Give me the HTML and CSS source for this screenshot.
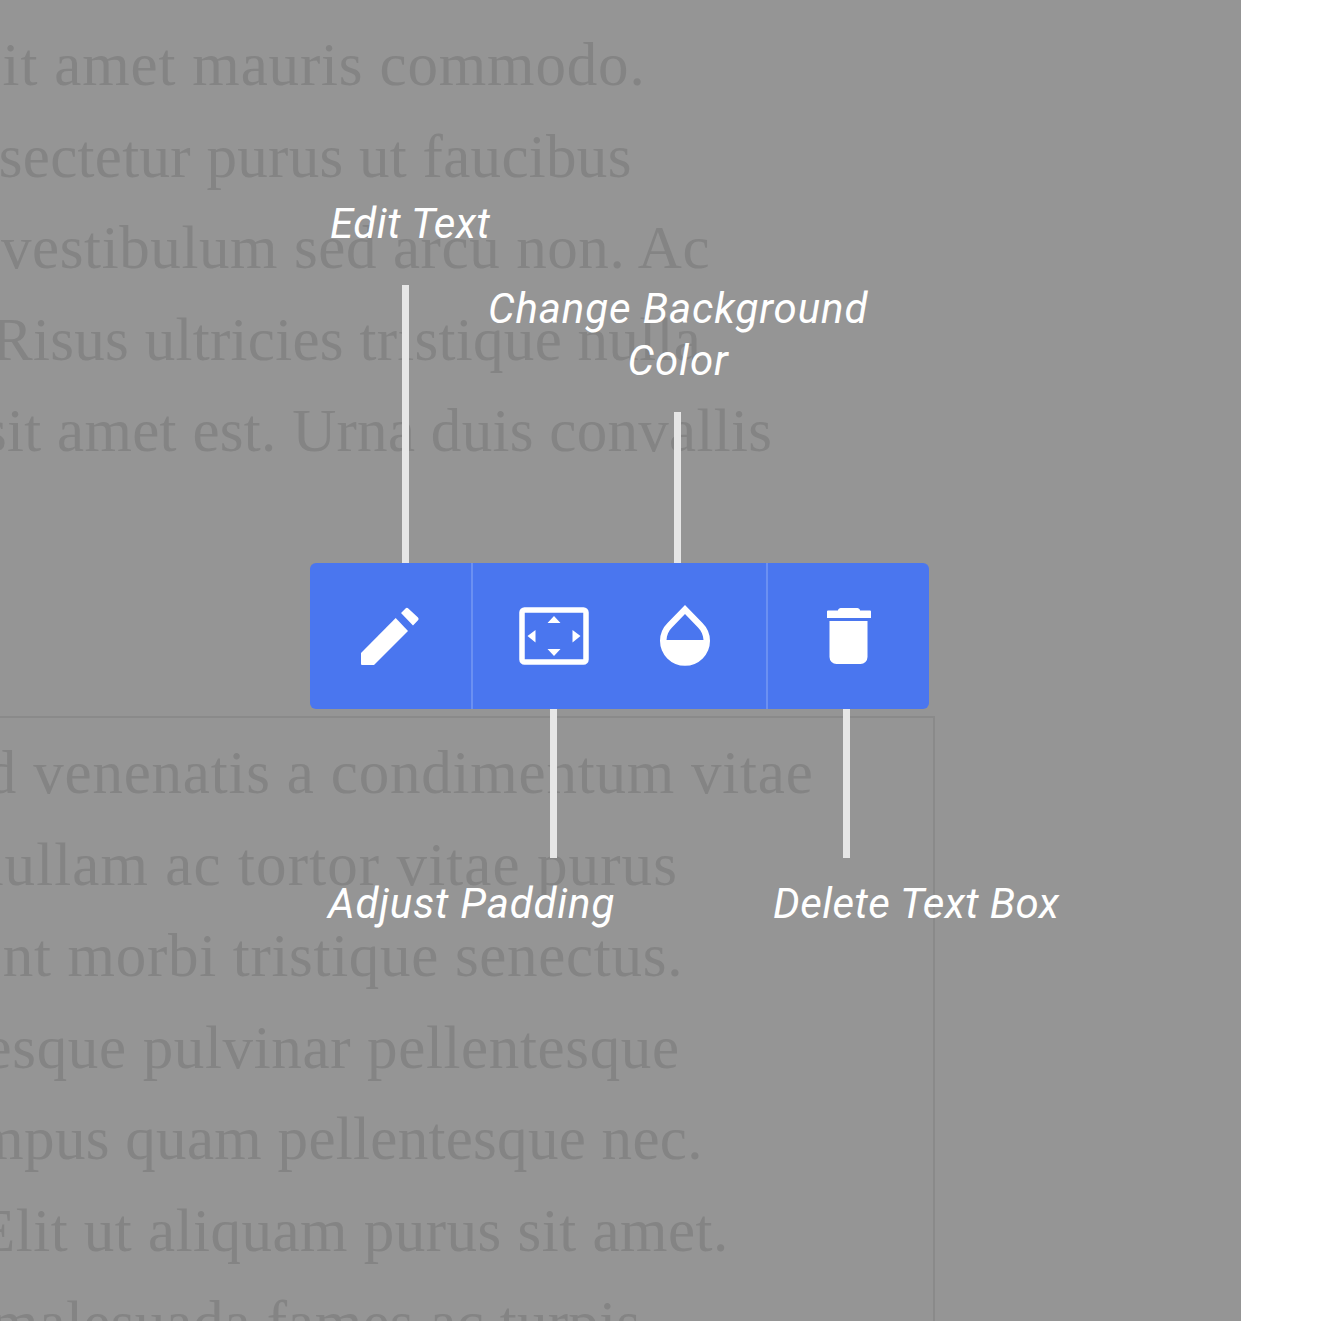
FILE: index.html
```html
<!DOCTYPE html>
<html lang="en">
<head>
<meta charset="utf-8">
<title>Text box toolbar</title>
<link rel="stylesheet" href="styles.css">
</head>
<body>
<main class="canvas">
  <div class="prose prose-top">
    <p class="line l1">sit amet mauris commodo.</p>
    <p class="line l2">nsectetur purus ut faucibus</p>
    <p class="line l3">vestibulum sed arcu non. Ac</p>
    <p class="line l4">Risus ultricies tristique nulla</p>
    <p class="line l5">sit amet est. Urna duis convallis</p>
  </div>
  <div class="textbox">
    <div class="prose">
      <p class="line l6">ed venenatis a condimentum vitae</p>
      <p class="line l7">nullam ac tortor vitae purus</p>
      <p class="line l8">ent morbi tristique senectus.</p>
      <p class="line l9">tesque pulvinar pellentesque</p>
      <p class="line l10">empus quam pellentesque nec.</p>
      <p class="line l11">Elit ut aliquam purus sit amet.</p>
      <p class="line l12">malesuada fames ac turpis</p>
    </div>
  </div>

  <div class="toolbar">
    <div class="group group-edit">
      <svg class="icon" width="60" height="60" viewBox="1 0 60 60" aria-hidden="true"><path fill="#fff" d="M1 47 35.700 12 48 25 14 59H2a1 1 0 0 1-1-1Z"/><path fill="#fff" d="M41 7 45.500 2.500a2 2 0 0 1 2.800 0L58 11.500a2 2 0 0 1 0 2.800L53 19.500Z"/></svg>
    </div>
    <div class="group group-middle">
      <svg class="icon" width="70" height="58" viewBox="0 0 70 58" aria-hidden="true"><rect x="3" y="3" width="64" height="52" rx="2.500" fill="none" stroke="#fff" stroke-width="5.500"/><path fill="#fff" d="M35 9 41.500 16H28.500ZM35 49 28.500 42H41.500ZM8.500 29 16.500 23V35.500ZM61.500 29 53.500 23V35.500Z"/></svg>
      <svg class="icon" width="52" height="62" viewBox="0 0 52 62" aria-hidden="true"><path fill="#fff" fill-rule="evenodd" d="M26 0 43.500 18A25 25 0 1 1 8.500 18ZM26 9 13 22.500C9.500 26 7.800 30 7.500 35H44.500C44.200 30 42.500 26 39 22.500Z"/></svg>
    </div>
    <div class="group group-delete">
      <svg class="icon" width="46" height="58" viewBox="0 0 46 58" aria-hidden="true"><path fill="#fff" d="M12 3.500C12 1.500 14 1 16 1H30C32 1 34 1.500 34 3.500H44a1 1 0 0 1 1 1V11H1V4.500a1 1 0 0 1 1-1ZM3.500 14H41.500V50A7 7 0 0 1 34.500 57H10.500A7 7 0 0 1 3.500 50Z"/></svg>
    </div>
  </div>

  <span class="leader leader-edit"></span>
  <span class="leader leader-color"></span>
  <span class="leader leader-padding"></span>
  <span class="leader leader-delete"></span>

  <p class="label label-edit">Edit Text</p>
  <p class="label label-color">Change Background<br>Color</p>
  <p class="label label-padding">Adjust Padding</p>
  <p class="label label-delete">Delete Text Box</p>
</main>
</body>
</html>
```
FILE: styles.css
```css
html, body { margin: 0; padding: 0; background: #fff; }
body { height: 1321px; overflow: hidden; }

.canvas {
  position: relative;
  width: 1241px;
  height: 1321px;
  overflow: hidden;
  background: #959595;
}

.prose { display: flex; flex-direction: column; }
.prose-top { padding-top: 19px; }

.line {
  margin: 0;
  height: 91.6px;
  font: 61px/91.6px "Liberation Serif", serif;
  letter-spacing: 0.3px;
  color: #848484;
  white-space: nowrap;
}
.l1 { margin-left: -22px; letter-spacing: 0.85px; }
.l2 { margin-left: -32px; }
.l3 { margin-left: 1px; letter-spacing: 0.6px; }
.l4 { margin-left: -8px; }
.l5 { margin-left: -17px; }
.l6 { margin-left: -42px; letter-spacing: 0.8px; }
.l7 { margin-left: -27px; letter-spacing: 1.1px; }
.l8 { margin-left: -25px; letter-spacing: 0.7px; }
.l9 { margin-left: -33px; letter-spacing: 0.65px; }
.l10 { margin-left: -51px; }
.l11 { margin-left: -22px; letter-spacing: 0.5px; }
.l12 { margin-left: -9px; }

.textbox {
  box-sizing: border-box;
  width: 935px;
  margin-top: 239px;
  padding-top: 9px;
  border-top: 2px solid #8a8a8a;
  border-right: 2px solid #8a8a8a;
}

.toolbar {
  position: absolute;
  left: 310px;
  top: 563px;
  display: flex;
  width: 619px;
  height: 146px;
  box-sizing: border-box;
  background: #4a76ef;
  border-radius: 6px;
}
.group { display: flex; align-items: center; justify-content: center; height: 100%; }
.group-edit { width: 161px; }
.group-middle {
  box-sizing: border-box;
  width: 297px;
  gap: 70px;
  padding-right: 9px;
  border-left: 2px solid #6b90f2;
  border-right: 2px solid #6b90f2;
}
.group-delete { flex: 1; }
.icon { display: block; }

.leader { position: absolute; width: 7px; background: #e6e6e6; }
.leader-edit { left: 402px; top: 285px; height: 278px; }
.leader-color { left: 674px; top: 412px; height: 151px; }
.leader-padding { left: 550px; top: 709px; height: 149px; }
.leader-delete { left: 843px; top: 709px; height: 149px; }

.label {
  position: absolute;
  margin: 0;
  font: italic 400 42px/52px Roboto, sans-serif;
  color: #fff;
  text-align: center;
  white-space: nowrap;
}
.label-edit { left: 330px; top: 198px; letter-spacing: 0.5px; }
.label-color { left: 488px; top: 283px; letter-spacing: 0.9px; }
.label-padding { left: 328px; top: 878px; letter-spacing: 0.85px; }
.label-delete { left: 773px; top: 878px; letter-spacing: 0.4px; }
```
